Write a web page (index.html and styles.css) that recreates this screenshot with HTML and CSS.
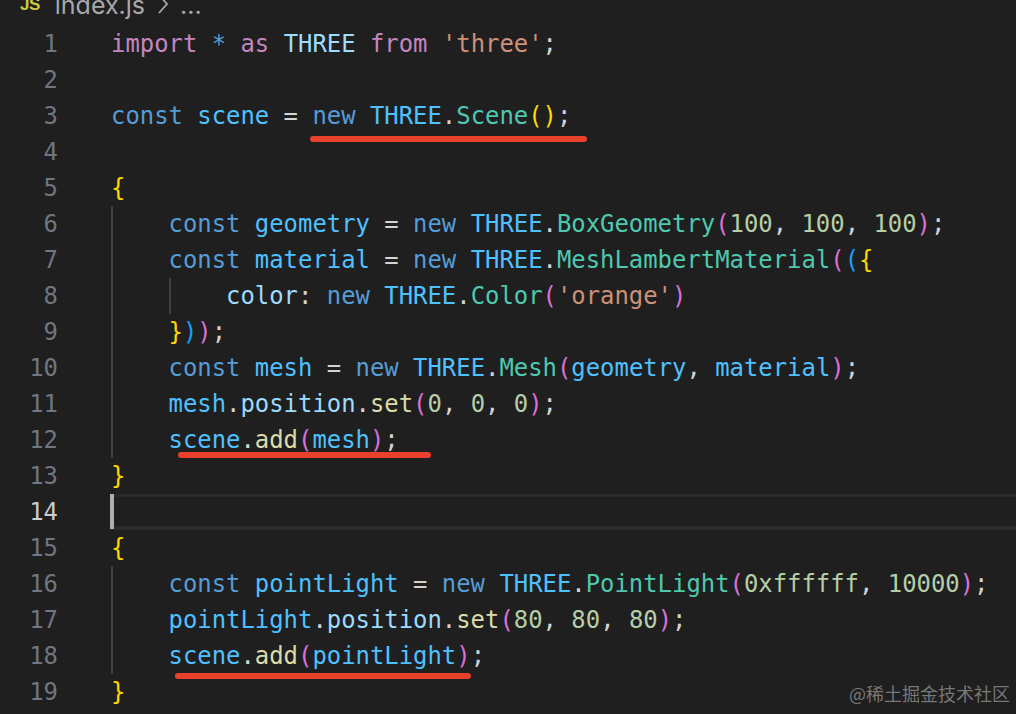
FILE: index.html
```html
<!DOCTYPE html>
<html lang="en">
<head>
<meta charset="utf-8">
<title>index.js</title>
<link rel="stylesheet" href="styles.css">
</head>
<body>
<div class="crumbs"><span class="js">JS</span><span class="fname">index.js</span><svg class="chev" width="12" height="20" viewBox="0 0 12 20"><path d="M2 1 L10 10 L2 19" fill="none" stroke="#a8a8a8" stroke-width="1.8"/></svg><span class="dots">...</span></div>
<div class="editor">
  <div class="line"><span class="ln">1</span><span class="code"><span class="k">import</span> <span class="s">*</span> <span class="k">as</span> <span class="p">THREE</span> <span class="k">from</span> <span class="str">'three'</span>;</span></div>
  <div class="line"><span class="ln">2</span><span class="code"></span></div>
  <div class="line"><span class="ln">3</span><span class="code"><span class="s">const</span> <span class="v">scene</span> = <span class="s">new</span> <span class="v">THREE</span>.<span class="c">Scene</span><span class="b1">()</span>;</span></div>
  <div class="line"><span class="ln">4</span><span class="code"></span></div>
  <div class="line"><span class="ln">5</span><span class="code"><span class="b1">{</span></span></div>
  <div class="line"><span class="ln">6</span><span class="code"><span class="ind"></span><span class="s">const</span> <span class="v">geometry</span> = <span class="s">new</span> <span class="v">THREE</span>.<span class="c">BoxGeometry</span><span class="b2">(</span><span class="n">100</span>, <span class="n">100</span>, <span class="n">100</span><span class="b2">)</span>;</span></div>
  <div class="line"><span class="ln">7</span><span class="code"><span class="ind"></span><span class="s">const</span> <span class="v">material</span> = <span class="s">new</span> <span class="v">THREE</span>.<span class="c">MeshLambertMaterial</span><span class="b2">(</span><span class="b3">(</span><span class="b1">{</span></span></div>
  <div class="line"><span class="ln">8</span><span class="code"><span class="ind"></span><span class="ind"></span><span class="p">color</span>: <span class="s">new</span> <span class="v">THREE</span>.<span class="c">Color</span><span class="b2">(</span><span class="str">'orange'</span><span class="b2">)</span></span></div>
  <div class="line"><span class="ln">9</span><span class="code"><span class="ind"></span><span class="b1">}</span><span class="b3">)</span><span class="b2">)</span>;</span></div>
  <div class="line"><span class="ln">10</span><span class="code"><span class="ind"></span><span class="s">const</span> <span class="v">mesh</span> = <span class="s">new</span> <span class="v">THREE</span>.<span class="c">Mesh</span><span class="b2">(</span><span class="v">geometry</span>, <span class="v">material</span><span class="b2">)</span>;</span></div>
  <div class="line"><span class="ln">11</span><span class="code"><span class="ind"></span><span class="v">mesh</span>.<span class="p">position</span>.<span class="f">set</span><span class="b2">(</span><span class="n">0</span>, <span class="n">0</span>, <span class="n">0</span><span class="b2">)</span>;</span></div>
  <div class="line"><span class="ln">12</span><span class="code"><span class="ind"></span><span class="v">scene</span>.<span class="f">add</span><span class="b2">(</span><span class="v">mesh</span><span class="b2">)</span>;</span></div>
  <div class="line"><span class="ln">13</span><span class="code"><span class="b1">}</span></span></div>
  <div class="line current"><span class="ln">14</span><span class="code"><span class="cursor"></span></span></div>
  <div class="line"><span class="ln">15</span><span class="code"><span class="b1">{</span></span></div>
  <div class="line"><span class="ln">16</span><span class="code"><span class="ind"></span><span class="s">const</span> <span class="v">pointLight</span> = <span class="s">new</span> <span class="v">THREE</span>.<span class="c">PointLight</span><span class="b2">(</span><span class="n">0xffffff</span>, <span class="n">10000</span><span class="b2">)</span>;</span></div>
  <div class="line"><span class="ln">17</span><span class="code"><span class="ind"></span><span class="v">pointLight</span>.<span class="p">position</span>.<span class="f">set</span><span class="b2">(</span><span class="n">80</span>, <span class="n">80</span>, <span class="n">80</span><span class="b2">)</span>;</span></div>
  <div class="line"><span class="ln">18</span><span class="code"><span class="ind"></span><span class="v">scene</span>.<span class="f">add</span><span class="b2">(</span><span class="v">pointLight</span><span class="b2">)</span>;</span></div>
  <div class="line"><span class="ln">19</span><span class="code"><span class="b1">}</span></span></div>
</div>
<div class="mark mark-a"></div>
<div class="mark mark-b"></div>
<div class="mark mark-c"></div>
<div class="watermark">@稀土掘金技术社区</div>
</body>
</html>
```

FILE: styles.css
```css
html, body {
  margin: 0;
  padding: 0;
  background: #1f1f1f;
}
body {
  width: 1016px;
  height: 714px;
  overflow: hidden;
  position: relative;
}
.crumbs {
  margin-top: -7px;
  height: 33px;
  padding-left: 20px;
  font-family: Inter, "Liberation Sans", sans-serif;
  font-size: 25px;
  line-height: 24px;
  color: #a8a8a8;
  white-space: nowrap;
}
.js {
  font-family: "Liberation Sans", sans-serif;
  font-weight: 700;
  font-size: 17px;
  color: #cbcb41;
  vertical-align: 4px;
  margin-right: 15px;
  letter-spacing: -0.5px;
}
.fname {
  margin-right: 12px;
}
.chev {
  vertical-align: 0px;
  margin-right: 11px;
}
.editor {
  font-family: "DejaVu Sans Mono", "Liberation Mono", monospace;
  font-size: 23.9px;
  color: #d4d4d4;
}
.line {
  display: flex;
  height: 36px;
  line-height: 36px;
}
.ln {
  flex: none;
  width: 58px;
  text-align: right;
  color: #6e7681;
}
.code {
  flex: 1;
  margin-left: 53px;
  white-space: pre;
}
.current .ln {
  color: #cccccc;
}
.current .code {
  margin-left: 52px;
  box-shadow: inset 0 3px 0 #2a2a2a, inset 0 -4px 0 #2a2a2a;
}
.cursor {
  display: inline-block;
  width: 4px;
  height: 35px;
  vertical-align: top;
  background: #aeafad;
}
.ind {
  display: inline-block;
  width: 4ch;
  height: 36px;
  vertical-align: top;
  box-shadow: inset 2px 0 0 #404040;
}
.k { color: #c586c0; }
.s { color: #569cd6; }
.v { color: #4fc1ff; }
.p { color: #9cdcfe; }
.c { color: #4ec9b0; }
.f { color: #dcdcaa; }
.n { color: #b5cea8; }
.str { color: #ce9178; }
.b1 { color: #ffd700; }
.b2 { color: #da70d6; }
.b3 { color: #179fff; }

.mark {
  position: absolute;
  height: 6px;
  border-radius: 3px;
  background: #e8402a;
}
.mark-a {
  left: 310px;
  top: 136px;
  width: 277px;
}
.mark-b {
  left: 178px;
  top: 452px;
  width: 253px;
}
.mark-c {
  left: 175px;
  top: 673px;
  width: 296px;
}
.watermark {
  position: absolute;
  right: 6px;
  bottom: 11px;
  font-family: "Noto Sans CJK SC", "Liberation Sans", sans-serif;
  font-size: 18px;
  line-height: 20px;
  color: rgba(150, 150, 150, 0.75);
}
```
